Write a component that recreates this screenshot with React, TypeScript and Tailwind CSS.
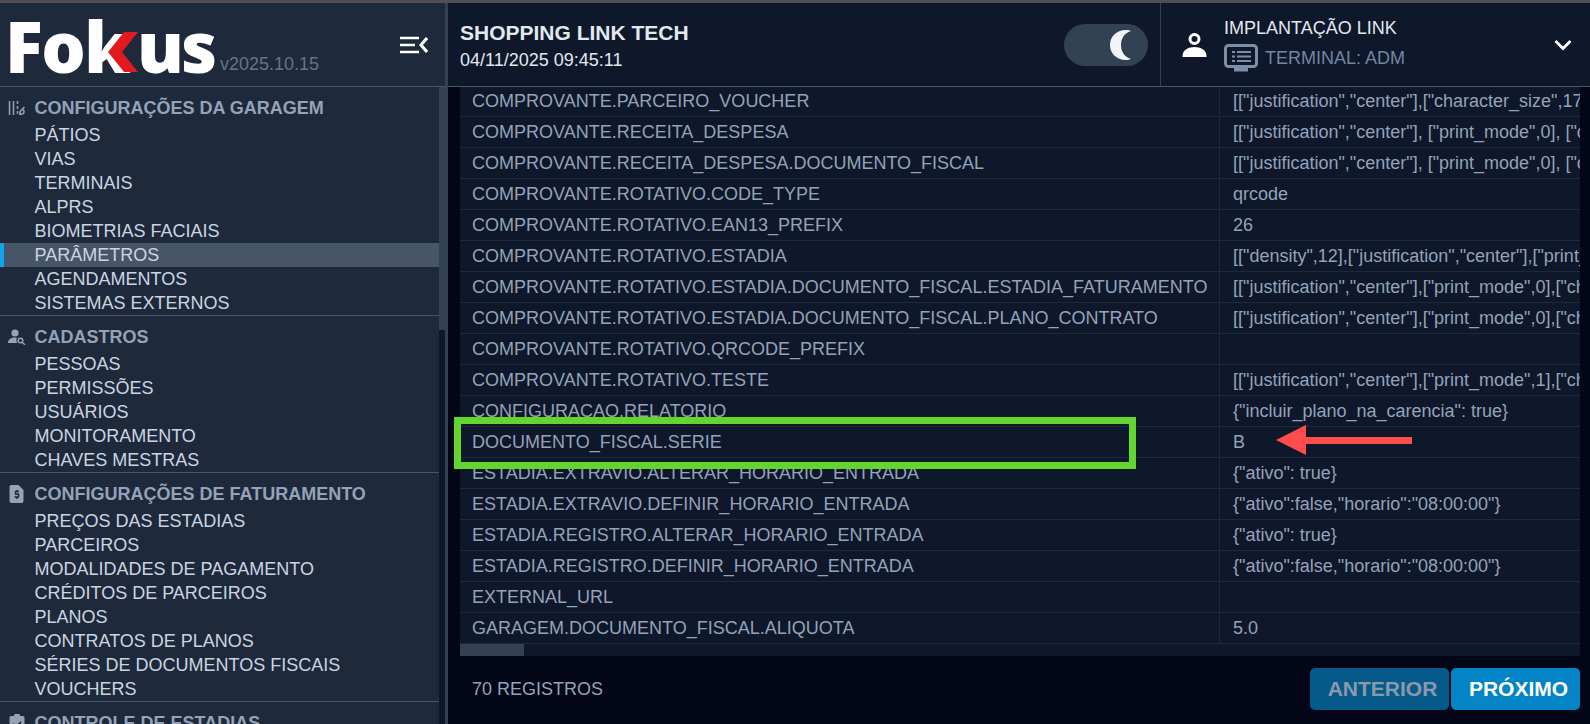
import React from "react";

const sections: { title: string; icon: string; items: string[] }[] = [
  { title: "CONFIGURAÇÕES DA GARAGEM", icon: "garage", items: ["PÁTIOS", "VIAS", "TERMINAIS", "ALPRS", "BIOMETRIAS FACIAIS", "PARÂMETROS", "AGENDAMENTOS", "SISTEMAS EXTERNOS"] },
  { title: "CADASTROS", icon: "person", items: ["PESSOAS", "PERMISSÕES", "USUÁRIOS", "MONITORAMENTO", "CHAVES MESTRAS"] },
  { title: "CONFIGURAÇÕES DE FATURAMENTO", icon: "receipt", items: ["PREÇOS DAS ESTADIAS", "PARCEIROS", "MODALIDADES DE PAGAMENTO", "CRÉDITOS DE PARCEIROS", "PLANOS", "CONTRATOS DE PLANOS", "SÉRIES DE DOCUMENTOS FISCAIS", "VOUCHERS"] },
  { title: "CONTROLE DE ESTADIAS", icon: "clipboard", items: [] },
];

const rows: [string, string][] = [
  ["COMPROVANTE.PARCEIRO_VOUCHER", '[["justification","center"],["character_size",17],["print_mode",0]]'],
  ["COMPROVANTE.RECEITA_DESPESA", '[["justification","center"], ["print_mode",0], ["character_size",17]]'],
  ["COMPROVANTE.RECEITA_DESPESA.DOCUMENTO_FISCAL", '[["justification","center"], ["print_mode",0], ["character_size",17]]'],
  ["COMPROVANTE.ROTATIVO.CODE_TYPE", "qrcode"],
  ["COMPROVANTE.ROTATIVO.EAN13_PREFIX", "26"],
  ["COMPROVANTE.ROTATIVO.ESTADIA", '[["density",12],["justification","center"],["print_mode",0]]'],
  ["COMPROVANTE.ROTATIVO.ESTADIA.DOCUMENTO_FISCAL.ESTADIA_FATURAMENTO", '[["justification","center"],["print_mode",0],["character_size",17]]'],
  ["COMPROVANTE.ROTATIVO.ESTADIA.DOCUMENTO_FISCAL.PLANO_CONTRATO", '[["justification","center"],["print_mode",0],["character_size",17]]'],
  ["COMPROVANTE.ROTATIVO.QRCODE_PREFIX", ""],
  ["COMPROVANTE.ROTATIVO.TESTE", '[["justification","center"],["print_mode",1],["character_size",17]]'],
  ["CONFIGURACAO.RELATORIO", '{"incluir_plano_na_carencia": true}'],
  ["DOCUMENTO_FISCAL.SERIE", "B"],
  ["ESTADIA.EXTRAVIO.ALTERAR_HORARIO_ENTRADA", '{"ativo": true}'],
  ["ESTADIA.EXTRAVIO.DEFINIR_HORARIO_ENTRADA", '{"ativo":false,"horario":"08:00:00"}'],
  ["ESTADIA.REGISTRO.ALTERAR_HORARIO_ENTRADA", '{"ativo": true}'],
  ["ESTADIA.REGISTRO.DEFINIR_HORARIO_ENTRADA", '{"ativo":false,"horario":"08:00:00"}'],
  ["EXTERNAL_URL", ""],
  ["GARAGEM.DOCUMENTO_FISCAL.ALIQUOTA", "5.0"],
];

function SectionIcon({ name }: { name: string }) {
  if (name === "garage")
    return (
      <svg width="18" height="18" viewBox="0 0 18 18" fill="none" stroke="#94a3b8" strokeWidth="1.5">
        <path d="M1.5 2v14M5.5 2v14" />
        <path d="M9.5 2v3M9.5 7v3M9.5 12v3" />
        <path d="M11.5 15.5l1-3.5 4-4M11.5 15.5c2.5 0 4.5-1 4.5-3s-1.5-2.5-3.5-.5" />
      </svg>
    );
  if (name === "person")
    return (
      <svg width="18" height="18" viewBox="0 0 18 18" fill="#94a3b8">
        <circle cx="7" cy="5" r="3.6" />
        <path d="M0 15c0-3.5 3-5.5 7-5.5 1 0 1.500.1 2 .3-1 1.500-.8 3.700.4 5.200z" />
        <circle cx="12.500" cy="12.500" r="2.300" fill="none" stroke="#94a3b8" strokeWidth="1.500" />
        <path d="M14 14.200l3 2.600" stroke="#94a3b8" strokeWidth="1.500" />
      </svg>
    );
  if (name === "receipt")
    return (
      <svg width="18" height="18" viewBox="0 0 18 18">
        <path d="M3.500 0h7l5 5v11a2 2 0 0 1-2 2h-10a2 2 0 0 1-2-2v-14a2 2 0 0 1 2-2z" fill="#94a3b8" />
        <path d="M11 6.500h-3.500v2.500h3v3h-4M9 5v1.500M9 12v2" fill="none" stroke="#1e293b" strokeWidth="1.400" />
      </svg>
    );
  return (
    <svg width="18" height="18" viewBox="0 0 18 18">
      <path d="M3 2h3a3 3 0 0 1 6 0h3a1.500 1.500 0 0 1 1.500 1.500v13a1.500 1.500 0 0 1-1.500 1.500h-12a1.500 1.500 0 0 1-1.500-1.500v-13a1.500 1.500 0 0 1 1.500-1.500z" fill="#94a3b8" />
      <path d="M5 10l3 3 5-5" fill="none" stroke="#1e293b" strokeWidth="1.800" />
    </svg>
  );
}

function Logo() {
  return (
    <div className="relative flex items-baseline text-white font-['Open_Sans',sans-serif] font-extrabold text-[70px] leading-[52px] tracking-[-1.5px] w-[206px] h-[52px]">
      <span className="-ml-[5px]">Fok</span>
      <span className="ml-[8px] tracking-[-3px]">us</span>
      <svg className="absolute left-[96px] top-[12px]" width="34" height="40" viewBox="0 0 34 40">
        <path d="M32 0H18L2 20l16 20h14L16 20z" fill="#e2191f" />
      </svg>
    </div>
  );
}

export default function App() {
  return (
    <div className="h-screen w-full overflow-hidden flex flex-col bg-[#020617] font-['Liberation_Sans',Arial,sans-serif] text-lg">
      <div className="h-[3px] shrink-0 bg-[#505050]" />
      <div className="flex flex-1 min-h-0">
        <aside className="w-[448px] shrink-0 flex flex-col bg-[#1e293b] border-r-[3px] border-[#334155]">
          <div className="h-[84px] shrink-0 border-b border-[#475569] flex items-center pl-[10px] pr-[17px] pt-[2px]">
            <Logo />
            <span className="text-lg text-[#64748b] ml-[4px] mt-[36px]">v2025.10.15</span>
            <svg className="ml-auto -mt-[2px]" width="28" height="20" viewBox="0 0 28 20" fill="none" stroke="#fff" strokeWidth="2.500">
              <path d="M0 3h19M0 10h15M0 17h19" />
              <path d="M27 3l-6 7 6 7" strokeWidth="3" />
            </svg>
          </div>
          <div className="flex flex-1 min-h-0">
            <nav className="w-[439px] overflow-hidden">
              {sections.map((s, i) => (
                <div key={s.title} className={`pt-[9px] ${i < sections.length - 1 ? "border-b border-[#475569]" : ""}`}>
                  <div className="flex items-center h-[24px] mb-[3px] pl-[8px]">
                    <span className="w-[26.500px] flex"><SectionIcon name={s.icon} /></span>
                    <span className="font-bold text-[#94a3b8] whitespace-nowrap">{s.title}</span>
                  </div>
                  {s.items.map((it) => (
                    <div
                      key={it}
                      className={it === "PARÂMETROS"
                        ? "h-[24px] leading-[24px] pl-[30.500px] text-[#cbd5e1] bg-[#475569] border-l-4 border-[#0ea5e9]"
                        : "h-[24px] leading-[24px] pl-[34.500px] text-[#cbd5e1]"}
                    >
                      {it}
                    </div>
                  ))}
                </div>
              ))}
            </nav>
            <div className="w-[6px] bg-[#0f172a]">
              <div className="h-[243px] bg-[#334155]" />
            </div>
          </div>
        </aside>

        <main className="relative flex-1 min-w-0 flex flex-col">
          <header className="h-[84px] shrink-0 bg-[#0f172a] border-b border-[#475569] flex items-center">
            <div className="pl-[12px] pt-[2px] flex-1">
              <div className="font-bold text-[21px] text-slate-200 leading-[28px]">SHOPPING LINK TECH</div>
              <div className="text-slate-200 leading-[26px]">04/11/2025 09:45:11</div>
            </div>
            <div className="w-[84px] h-[42px] rounded-full bg-[#334155] flex items-center justify-end pr-[16px] mr-[12px]">
              <svg width="22" height="30" viewBox="0 0 22 30">
                <path d="M16 0C6 0 0 7 0 15s6 15 16 15c2 0 4-.5 5-1-7-2-10-8-10-14s3-12 10-14c-1-.5-3-1-5-1z" fill="#f1f5f9" />
              </svg>
            </div>
            <div className="w-[430px] h-full border-l border-[#334155] flex items-center pl-[21px] pr-[18px]">
              <svg width="25" height="24" viewBox="0 0 25 24" fill="none">
                <circle cx="12.500" cy="6" r="4.500" stroke="#fff" strokeWidth="3" />
                <path d="M0.500 24v-1c0-6 6-9 12-9s12 3 12 9v1z" fill="#fff" />
              </svg>
              <div className="ml-[17px] pb-[2px]">
                <div className="text-slate-200 leading-[24px] mb-[4px]">IMPLANTAÇÃO LINK</div>
                <div className="flex items-center text-[#7286a0] leading-[28px]">
                  <svg width="34" height="28" viewBox="0 0 34 28" fill="none" stroke="#7c8fa8" strokeWidth="3">
                    <rect x="1.500" y="1.500" width="31" height="21" rx="3" />
                    <path d="M8 8h3M13 8h14M8 12.500h3M13 12.500h14M8 17h3M13 17h14" strokeWidth="2" />
                    <path d="M10 25.500h14" strokeWidth="4" />
                  </svg>
                  <span className="ml-[7px]">TERMINAL: ADM</span>
                </div>
              </div>
              <svg className="ml-auto" width="18" height="12" viewBox="0 0 18 12" fill="none" stroke="#fff" strokeWidth="2.800">
                <path d="M1.500 2l7.500 7.500 7.500-7.500" />
              </svg>
            </div>
          </header>

          <div className="flex-1 min-h-0 ml-[12px] mr-[10px] flex flex-col">
            <div className="bg-[#0f172a] overflow-hidden">
              {rows.map(([k, v], i) => (
                <div key={k} className={`flex border-b border-[#1e293b] ${i === 0 ? "h-[30px] pb-[1px]" : "h-[31px]"} items-center whitespace-nowrap text-[#94a3b8]`}>
                  <div className="w-[760px] shrink-0 h-full border-r border-[#1e293b] pl-[12px] flex items-center">{k}</div>
                  <div className="pl-[13px] flex-1 overflow-hidden">{v}</div>
                </div>
              ))}
            </div>
            <div className="h-[12px] bg-[#0f172a] shrink-0">
              <div className="w-[64px] h-full bg-[#334155]" />
            </div>
            <div className="flex items-center justify-between mt-[12px] h-[42px]">
              <span className="pl-[12px] text-[#94a3b8]">70 REGISTROS</span>
              <div className="flex gap-[2px]">
                <button className="w-[139px] h-[42px] pl-[6px] rounded-[5px] bg-[#065a8a] text-[#8a9aac] font-bold text-[21px]">ANTERIOR</button>
                <button className="w-[129px] h-[42px] pl-[6px] rounded-[5px] bg-[#0284c7] text-white font-bold text-[21px]">PRÓXIMO</button>
              </div>
            </div>
          </div>

          <div className="absolute left-[6px] top-[414px] w-[682px] h-[52px] border-[7px] border-[#62d62f]" />
          <svg className="absolute left-[828px] top-[422px]" width="136" height="30" viewBox="0 0 136 30">
            <path d="M0 15L30 0v12h106v7H30v11z" fill="#ff4d4d" />
          </svg>
        </main>
      </div>
    </div>
  );
}
